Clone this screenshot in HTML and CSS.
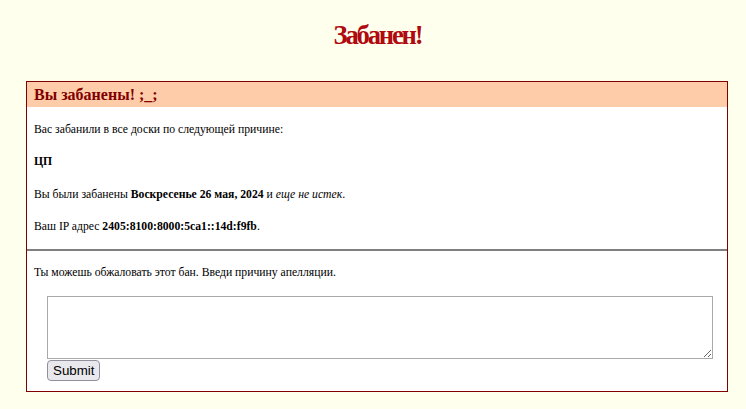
FILE: index.html
```html
<!DOCTYPE html>
<html>
<head>
<meta charset="utf-8">
<title>Забанен!</title>
<link rel="stylesheet" href="styles.css">
</head>
<body>
<header class="top">
  <h1 class="title">Забанен!</h1>
</header>
<div class="ban">
  <h2 class="ban-head">Вы забанены! ;_;</h2>
  <p class="ban-p first">Вас забанили в все доски по следующей причине:</p>
  <p class="ban-p reason">ЦП</p>
  <p class="ban-p">Вы были забанены <strong>Воскресенье 26 мая, 2024</strong> и <em>еще не истек</em>.</p>
  <p class="ban-p">Ваш IP адрес <strong>2405:8100:8000:5ca1::14d:f9fb</strong>.</p>
  <hr class="sep">
  <p class="ban-p">Ты можешь обжаловать этот бан. Введи причину апелляции.</p>
  <form class="appeal">
    <textarea class="appeal-text" rows="3"></textarea>
    <div class="appeal-row"><input class="appeal-btn" type="submit" value="Submit"></div>
  </form>
</div>
</body>
</html>
```
FILE: styles.css
```css
html, body {
  background: #ffffee;
}
body {
  margin: 8px;
  font-family: "Liberation Serif", serif;
  color: #000;
}
.top {
  padding-top: 14px;
}
.title {
  margin: 0;
  padding-left: 9px;
  text-align: center;
  font-family: "Liberation Serif", serif;
  font-size: 20pt;
  letter-spacing: -2.2px;
  font-weight: bold;
  color: #af0a0f;
  line-height: 26px;
}
.ban {
  background: #fff;
  border: 1px solid #800000;
  width: 700px;
  margin: 33px 0 0 18px;
}
.ban-head {
  margin: 0;
  background: #ffccaa;
  color: #800000;
  font-size: 16px;
  line-height: 19px;
  padding: 3px 7px;
  font-weight: bold;
}
.ban-p {
  font-size: 11.7px;
  line-height: 14.33px;
  margin: 12px 0;
  padding: 3px 7px;
}
.ban-p.first {
  margin-top: 13px;
}
.reason {
  font-weight: bold;
}
.sep {
  margin: 0;
  border: 0;
  border-top: 2px solid #808080;
  height: 0;
}
.appeal {
  padding: 0 13px 10px 20px;
}
.appeal-text {
  display: block;
  box-sizing: border-box;
  width: 666px;
  height: 63px;
  margin: 0;
  border: 1px solid #a9a9a9;
  background: #fff;
}
.appeal-row {
  padding-top: 1px;
}
.appeal-btn {
  margin: 0;
  font-family: "Liberation Sans", Arial, sans-serif;
  font-size: 13.33px;
  line-height: 15px;
  padding: 2px 5px;
  color: #000;
  background: #e9e9ed;
  border: 1px solid #8f8f9d;
  border-radius: 4px;
}
```
